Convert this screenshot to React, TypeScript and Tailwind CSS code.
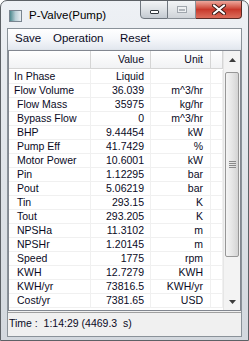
import React from "react";

interface Row {
  name: string;
  value: string;
  unit: string;
  indent: boolean;
}

const rows: Row[] = [
  { name: "In Phase", value: "Liquid", unit: "", indent: false },
  { name: "Flow Volume", value: "36.039", unit: "m^3/hr", indent: false },
  { name: "Flow Mass", value: "35975", unit: "kg/hr", indent: true },
  { name: "Bypass Flow", value: "0", unit: "m^3/hr", indent: true },
  { name: "BHP", value: "9.44454", unit: "kW", indent: true },
  { name: "Pump Eff", value: "41.7429", unit: "%", indent: true },
  { name: "Motor Power", value: "10.6001", unit: "kW", indent: true },
  { name: "Pin", value: "1.12295", unit: "bar", indent: true },
  { name: "Pout", value: "5.06219", unit: "bar", indent: true },
  { name: "Tin", value: "293.15", unit: "K", indent: true },
  { name: "Tout", value: "293.205", unit: "K", indent: true },
  { name: "NPSHa", value: "11.3102", unit: "m", indent: true },
  { name: "NPSHr", value: "1.20145", unit: "m", indent: true },
  { name: "Speed", value: "1775", unit: "rpm", indent: true },
  { name: "KWH", value: "12.7279", unit: "KWH", indent: true },
  { name: "KWH/yr", value: "73816.5", unit: "KWH/yr", indent: true },
  { name: "Cost/yr", value: "7381.65", unit: "USD", indent: true },
];

export default function App() {
  return (
    <div
      className="w-[249px] h-[341px] flex flex-col rounded-t-[7px] border border-[#5d6166] bg-gradient-to-b from-[#eef1f5] via-[#dfe3e8] to-[#d3d8de] overflow-hidden"
      style={{ fontFamily: '"Liberation Sans", Arial, sans-serif' }}
    >
      {/* Title bar */}
      <div className="h-[27px] flex items-start shrink-0">
        <div className="flex items-center gap-[7px] pl-[8px] pt-[9px]">
          <div className="w-[13px] h-[12px] border border-[#7a8590] bg-gradient-to-r from-[#4d8a8f] via-[#b9cfd6] to-[#e9eef2]" />
          <span className="text-[11.5px] text-black leading-none">P-Valve(Pump)</span>
        </div>

        {/* Caption buttons */}
        <div className="ml-auto mr-[6px] flex h-[19px] mt-[-1px]">
          <div className="w-[28px] h-full rounded-bl-[4px] border border-[#6f767e] bg-gradient-to-b from-[#f2f4f6] via-[#dde1e5] to-[#c4cad1] flex items-center justify-center">
            <div className="w-[9px] h-[4px] mt-[5px] rounded-[1px] border border-[#30363c] bg-white" />
          </div>
          <div className="w-[28px] h-full border-y border-r border-[#8a9097] bg-gradient-to-b from-[#f2f4f6] via-[#e2e5e8] to-[#cfd3d8] flex items-center justify-center">
            <div className="w-[10px] h-[7px] border border-[#a0a6ad] bg-[#eef0f2] flex items-center justify-center">
              <div className="w-[6px] h-[2px] border border-[#b0b5bb]" />
            </div>
          </div>
          <div className="w-[46px] h-full rounded-br-[4px] border-y border-r border-[#5a2a25] bg-gradient-to-b from-[#eda79d] via-[#c8382b] to-[#dc6d5c] flex items-center justify-center">
            <svg width="14" height="11" viewBox="0 0 14 11">
              <path d="M2 1.5 L12 9.5 M12 1.5 L2 9.5" stroke="#3a1a16" strokeWidth="4" strokeLinecap="round" />
              <path d="M2 1.5 L12 9.5 M12 1.5 L2 9.5" stroke="#ffffff" strokeWidth="2.2" strokeLinecap="round" />
            </svg>
          </div>
        </div>
      </div>

      {/* Client area */}
      <div className="mx-[6px] mb-[3px] flex-1 flex flex-col border border-[#8a9299] bg-[#f0f0f0] text-[#0a0a1e]">
        {/* Menu bar */}
        <div className="h-[21px] shrink-0 flex items-center pl-[7px] text-[11.5px] bg-gradient-to-b from-[#ffffff] via-[#f5f7fa] to-[#e3e8ef] border-b border-[#dfe4ea]">
          <span className="w-[38px]">Save</span>
          <span className="w-[67px]">Operation</span>
          <span>Reset</span>
        </div>

        {/* List view */}
        <div className="h-[261px] shrink-0 flex border border-[#828790] bg-white text-[10.5px] leading-none">
          <div className="w-[214px] flex flex-col">
            {/* Header */}
            <div className="h-[18px] flex bg-gradient-to-b from-[#ffffff] to-[#f1f2f4] border-b border-[#d5d5d5]">
              <div className="w-[82px] border-r border-[#d5d5d5]" />
              <div className="w-[60px] border-r border-[#d5d5d5] flex items-center justify-end pr-[6px]">Value</div>
              <div className="w-[60px] border-r border-[#d5d5d5] flex items-center justify-end pr-[7px]">Unit</div>
              <div className="w-[12px] border-r border-[#d5d5d5]" />
            </div>

            {/* Rows */}
            <div className="flex-1 pt-[1px]">
              {rows.map((r) => (
                <div key={r.name} className="h-[14px] flex border-b border-[#f0f0f0]">
                  <div className={`w-[82px] border-r border-[#f0f0f0] flex items-center ${r.indent ? "pl-[8px]" : "pl-[5px]"}`}>
                    {r.name}
                  </div>
                  <div className="w-[60px] border-r border-[#f0f0f0] flex items-center justify-end pr-[6px]">{r.value}</div>
                  <div className="w-[60px] border-r border-[#f0f0f0] flex items-center justify-end pr-[7px]">{r.unit}</div>
                  <div className="w-[12px] border-r border-[#f0f0f0]" />
                </div>
              ))}
            </div>
          </div>

          {/* Scrollbar */}
          <div className="w-[17px] flex flex-col bg-[#f3f3f3] border-l border-[#e6e6e6]">
            <div className="h-[17px] flex items-center justify-center">
              <svg width="7" height="4" viewBox="0 0 7 4">
                <path d="M0 4 L3.5 0 L7 4 Z" fill="#3c3c3c" />
              </svg>
            </div>
            <div className="h-[4px]" />
            <div className="h-[185px] mx-[1px] rounded-[2px] border border-[#979797] bg-gradient-to-r from-[#f4f4f4] via-[#e6e6e6] to-[#d4d4d4] flex items-center justify-center">
              <div className="flex flex-col gap-[1px]">
                <div className="w-[7px] h-[1px] bg-[#8a8a8a]" />
                <div className="w-[7px] h-[1px] bg-[#8a8a8a]" />
                <div className="w-[7px] h-[1px] bg-[#8a8a8a]" />
                <div className="w-[7px] h-[1px] bg-[#8a8a8a]" />
              </div>
            </div>
            <div className="flex-1" />
            <div className="h-[17px] flex items-center justify-center">
              <svg width="7" height="4" viewBox="0 0 7 4">
                <path d="M0 0 L3.5 4 L7 0 Z" fill="#3c3c3c" />
              </svg>
            </div>
          </div>
        </div>

        {/* Status bar */}
        <div className="flex-1 pt-[1px] flex">
          <div className="flex-1 border-t border-[#a0a0a0] flex items-center pl-[1px] pb-[2px] text-[10.5px] whitespace-pre">
            Time :  1:14:29 (4469.3  s)
          </div>
        </div>
      </div>
    </div>
  );
}
